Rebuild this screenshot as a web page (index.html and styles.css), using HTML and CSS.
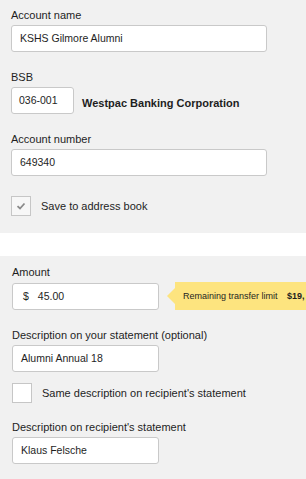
FILE: index.html
```html
<!DOCTYPE html>
<html lang="en">
<head>
  <meta charset="UTF-8" />
  <meta name="viewport" content="width=device-width, initial-scale=1.0"/>
  <title>Pay anyone</title>
  <link rel="stylesheet" href="styles.css">
</head>
<body>
  <div class="panel panel-payee">
    <div class="field">
      <label class="field-label">Account name</label>
      <div class="input input-full">KSHS Gilmore Alumni</div>
    </div>

    <div class="field">
      <label class="field-label">BSB</label>
      <div class="bsb-row">
        <div class="input input-bsb">036-001</div>
        <span class="bank-name">Westpac Banking Corporation</span>
      </div>
    </div>

    <div class="field">
      <label class="field-label">Account number</label>
      <div class="input input-full">649340</div>
    </div>

    <div class="check-row check-save">
      <span class="checkbox checked">
        <svg width="10" height="8" viewBox="0 0 10 8"><path d="M1.5 4.2 L4 6.5 L8.5 1.5" fill="none" stroke="#8a8a8a" stroke-width="1.8"/></svg>
      </span>
      <span>Save to address book</span>
    </div>
  </div>

  <div class="panel panel-payment">
    <div class="field">
      <label class="field-label">Amount</label>
      <div class="amount-row">
        <div class="input input-short"><span class="currency">$</span>45.00</div>
        <div class="limit-tip">Remaining transfer limit <b>$19,</b></div>
      </div>
    </div>

    <div class="field">
      <label class="field-label">Description on your statement (optional)</label>
      <div class="input input-short">Alumni Annual 18</div>
    </div>

    <div class="check-row check-same">
      <span class="checkbox"></span>
      <span>Same description on recipient's statement</span>
    </div>

    <div class="field">
      <label class="field-label">Description on recipient's statement</label>
      <div class="input input-short">Klaus Felsche</div>
    </div>
  </div>
</body>
</html>
```

FILE: styles.css
```css
body {
  margin: 0;
  background-color: #ffffff;
  font-family: 'Liberation Sans', Arial, sans-serif;
  color: #1e1e1e;
  overflow: hidden;
}
.panel {
  background-color: #f1f1f1;
  padding: 8px 0 17px 11px;
}
.panel-payment {
  margin-top: 23px;
  padding: 9px 0 20px 12px;
}
.field {
  margin-bottom: 18px;
}
.field-label {
  display: block;
  font-size: 11px;
  line-height: 14px;
  margin-bottom: 3px;
}
.input {
  box-sizing: border-box;
  flex-shrink: 0;
  height: 27px;
  background-color: #fff;
  border: 1px solid #c9c9c9;
  border-radius: 3px;
  padding: 0 8px;
  font-size: 10.5px;
  line-height: 25px;
  white-space: nowrap;
}
.input-full {
  width: 256px;
}
.input-short {
  width: 147px;
}
.input-bsb {
  width: 63px;
  padding-left: 7px;
}
.bsb-row {
  display: flex;
  align-items: center;
  gap: 8px;
}
.bank-name {
  font-size: 11px;
  font-weight: bold;
  padding-top: 4px;
}
.currency {
  margin: 0 9px 0 2px;
}
.amount-row {
  display: flex;
  align-items: center;
}
.limit-tip {
  position: relative;
  flex: 1;
  margin-left: 16px;
  height: 28px;
  line-height: 28px;
  padding-left: 8px;
  background-color: #fde47f;
  font-size: 9px;
  white-space: nowrap;
}
.limit-tip b {
  margin-left: 7px;
}
.limit-tip::before {
  content: "";
  position: absolute;
  left: -8px;
  top: 6px;
  border-top: 8px solid transparent;
  border-bottom: 8px solid transparent;
  border-right: 8px solid #fde47f;
}
.check-row {
  display: flex;
  align-items: center;
  gap: 10px;
  font-size: 11px;
}
.check-save {
  margin-top: 20px;
}
.check-same {
  margin-top: -7px;
  margin-bottom: 17px;
}
.checkbox {
  box-sizing: border-box;
  width: 20px;
  height: 20px;
  border: 1px solid #c6c6c6;
  background-color: #fff;
  display: flex;
  align-items: center;
  justify-content: center;
}
.checkbox.checked {
  background-color: #f7f7f7;
}
.panel-payment .field:last-child {
  margin-bottom: 0;
}
.panel-payee .field:nth-child(3) {
  margin-bottom: 0;
}
```
